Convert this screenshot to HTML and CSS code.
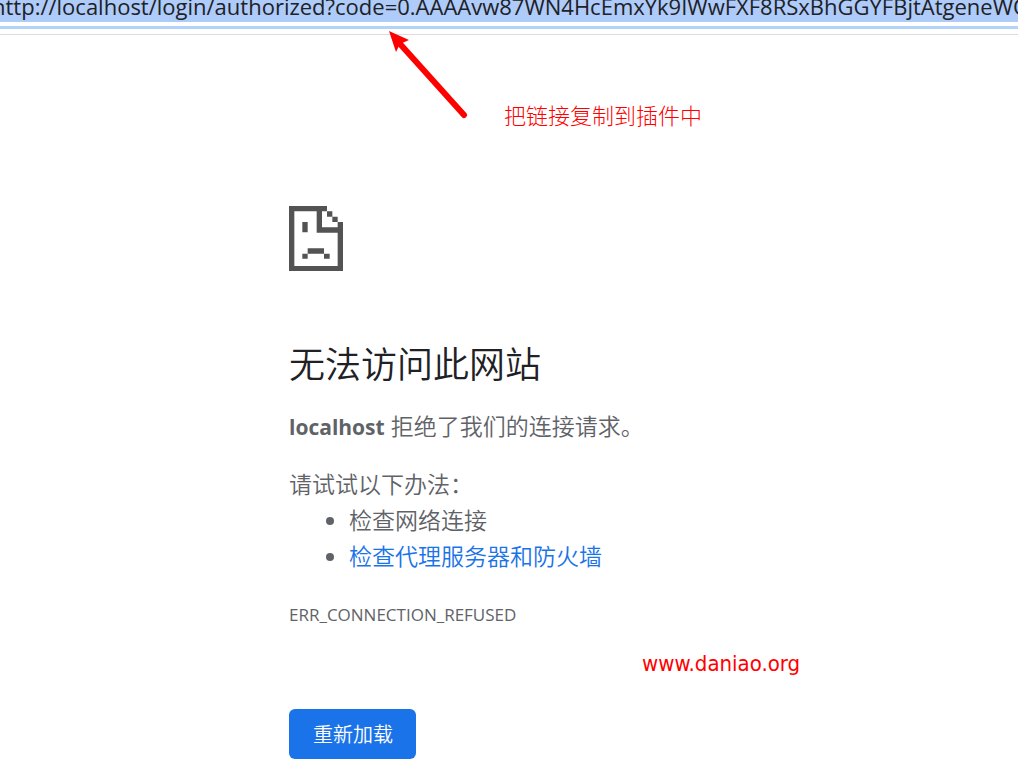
FILE: index.html
```html
<!DOCTYPE html>
<html lang="zh-CN">
<head>
    <meta charset="UTF-8">
    <meta name="viewport" content="width=device-width, initial-scale=1.0">
    <title>localhost</title>
    <link rel="stylesheet" href="styles.css">
</head>
<body>
    <header class="address-bar">
        <input type="text" class="address-input" aria-label="地址" value="http://localhost/login/authorized?code=0.AAAAvw87WN4HcEmxYk9IWwFXF8RSxBhGGYFBjtAtgeneWQ">
    </header>

    <main class="error-page">
        <svg class="error-icon" viewBox="0 0 162 195" aria-hidden="true">
            <!-- page outline with folded corner -->
            <path d="M0 0H114V16H99V64H146V48H162V195H0ZM16 16V180H146V80H83V16Z" fill-rule="evenodd"/>
            <path d="M114 16h16v16h-16zM130 32h16v16h-16z"/>
            <!-- sad face -->
            <path d="M40 48h16v31h-16zM56 127h49v16h-49zM40 143h16v15h-16zM105 143h17v15h-17z"/>
        </svg>

        <h1>无法访问此网站</h1>
        <p class="summary"><strong>localhost</strong> 拒绝了我们的连接请求。</p>

        <div class="suggestions">
            <p>请试试以下办法：</p>
            <ul>
                <li>检查网络连接</li>
                <li><a href="#proxy">检查代理服务器和防火墙</a></li>
            </ul>
        </div>

        <div class="error-code">ERR_CONNECTION_REFUSED</div>
        <button type="button" class="reload-btn">重新加载</button>
    </main>

    <!-- notes drawn over the page -->
    <svg class="arrow" viewBox="0 0 80 90" aria-hidden="true">
        <path class="arrow-line" d="M13 14L76 84"/>
        <path class="arrow-head" d="M1 0L21 9L12 13L8 21Z"/>
    </svg>
    <div class="note">把链接复制到插件中</div>
    <div class="watermark">www.daniao.org</div>
</body>
</html>
```

FILE: styles.css
```css
:root {
    --text-color: #5f6368;
    --heading-color: #202124;
    --link-color: #1a73e8;
    --note-color: #ff0000;
}
* { margin: 0; padding: 0; box-sizing: border-box; }
body { position: relative; background-color: #fff; color: var(--text-color); font-family: 'Open Sans', 'Noto Sans CJK SC', sans-serif; font-size: 23px; line-height: 36px; overflow: hidden; }
.address-bar { height: 35px; border-bottom: 1px solid #dadce0; overflow: hidden; }
.address-input { display: block; width: calc(100% + 8px); height: 29px; margin-left: -8px; padding-bottom: 14px; border: none; border-bottom: 3px solid #b3d3fa; outline: none; background: linear-gradient(#aecbfa 22px, #fff 22px); color: var(--heading-color); font-family: 'Open Sans', sans-serif; font-size: 22px; line-height: 12px; }
.error-page { max-width: 440px; margin: 0 auto; padding-top: 171px; }
.error-icon { display: block; width: 54px; height: 65px; fill: #535353; }
h1 { margin-top: 66px; color: var(--heading-color); font-size: 36px; font-weight: 350; line-height: 56px; }
.summary { margin-top: 15px; font-weight: 350; }
.summary strong { font-weight: 700; font-size: 21px; }
.suggestions { margin-top: 21px; font-weight: 350; }
.suggestions ul { padding-left: 60px; }
.suggestions a { color: var(--link-color); text-decoration: none; }
.error-code { margin-top: 23px; font-size: 17px; }
.reload-btn { display: block; margin-top: 76px; padding: 11px 23px 9px 24px; border: none; border-radius: 6px; background-color: var(--link-color); color: #fff; font-family: inherit; font-size: 20px; font-weight: 350; line-height: 30px; cursor: pointer; }
.arrow { position: absolute; top: 31px; left: 388px; width: 80px; height: 90px; }
.arrow-line { fill: none; stroke: var(--note-color); stroke-width: 6; stroke-linecap: round; }
.arrow-head { fill: var(--note-color); }
.note { position: absolute; top: 97px; left: 504px; color: var(--note-color); font-size: 22px; font-weight: 300; }
.watermark { position: absolute; top: 646px; left: 642px; color: var(--note-color); font-family: 'DejaVu Sans Condensed', 'Open Sans', sans-serif; font-size: 22px; }
```
